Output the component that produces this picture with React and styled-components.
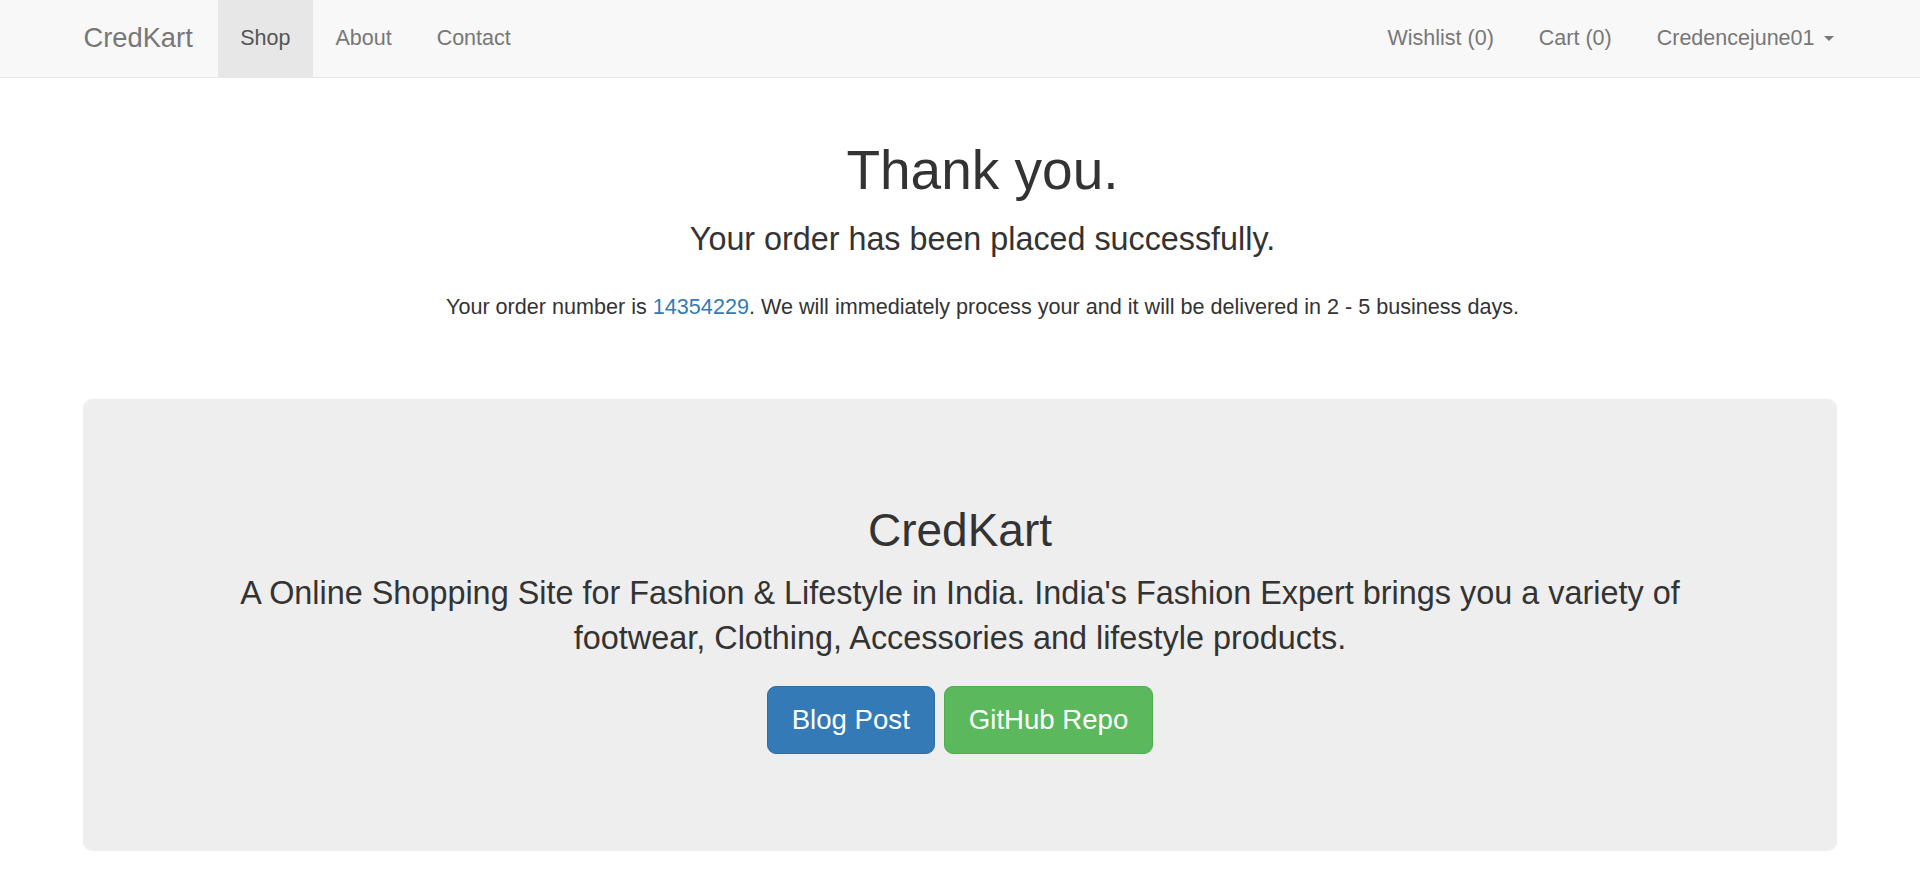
import React from "react";
import styled, { createGlobalStyle } from "styled-components";

const GlobalStyle = createGlobalStyle`
  html, body {
    margin: 0;
    padding: 0;
    background: #fff;
    font-family: "Liberation Sans", Arial, Helvetica, sans-serif;
    color: #333;
  }
  * {
    box-sizing: border-box;
  }
`;

const Navbar = styled.nav`
  height: 78px;
  background-color: #f8f8f8;
  border-bottom: 1.5px solid #e7e7e7;
`;

const NavInner = styled.div`
  display: flex;
  align-items: stretch;
  justify-content: space-between;
  height: 76.5px;
  padding: 0 64px 0 61px;
`;

const NavGroup = styled.ul`
  display: flex;
  align-items: stretch;
  margin: 0;
  padding: 0;
  list-style: none;
`;

const NavItem = styled.li`
  display: flex;
`;

const Brand = styled.a`
  display: flex;
  align-items: center;
  padding: 0 25px 0 22.5px;
  font-size: 27.3px;
  color: #777;
  text-decoration: none;
`;

const NavLink = styled.a`
  display: flex;
  align-items: center;
  padding: 0 22.5px;
  font-size: 21.5px;
  line-height: 30px;
  text-decoration: none;
  color: ${({ $active }) => ($active ? "#555" : "#777")};
  background-color: ${({ $active }) => ($active ? "#e7e7e7" : "transparent")};
`;

const Caret = styled.span`
  display: inline-block;
  width: 0;
  height: 0;
  margin-left: 9px;
  border-top: 5px solid #777;
  border-left: 5px solid transparent;
  border-right: 5px solid transparent;
`;

const Main = styled.main`
  padding: 0 83px;
`;

const Header = styled.header`
  display: flex;
  flex-direction: column;
  align-items: center;
  text-align: center;
  padding: 62px 0 0 45px;
`;

const Title = styled.h1`
  margin: 0;
  font-size: 55px;
  font-weight: 500;
  line-height: 1.1;
`;

const Subtitle = styled.h3`
  margin: 21px 0 0;
  font-size: 32.3px;
  font-weight: 500;
  line-height: 1.1;
`;

const OrderNote = styled.p`
  margin: 35px 0 0;
  font-size: 21.6px;
  line-height: 30px;
`;

const OrderLink = styled.a`
  color: #337ab7;
  text-decoration: none;
`;

const Jumbotron = styled.section`
  margin-top: 77px;
  padding: 72px 100px;
  background-color: #eee;
  border-radius: 9px;
  text-align: center;
`;

const JumboTitle = styled.h2`
  margin: 34px 0 15px;
  font-size: 46px;
  font-weight: 500;
  line-height: 1.1;
`;

const Lead = styled.p`
  margin: 0 0 25px;
  font-size: 32.4px;
  line-height: 45px;
`;

const ButtonRow = styled.div`
  display: flex;
  justify-content: center;
  gap: 9px;
  margin-bottom: 25px;
`;

const Button = styled.a`
  display: inline-block;
  padding: 15px 24px;
  font-size: 27.6px;
  line-height: 36px;
  color: #fff;
  text-decoration: none;
  border-radius: 9px;
  border: 1.5px solid ${({ $variant }) => ($variant === "success" ? "#4cae4c" : "#2e6da4")};
  background-color: ${({ $variant }) => ($variant === "success" ? "#5cb85c" : "#337ab7")};
`;

const leftLinks = ["Shop", "About", "Contact"];
const rightLinks = ["Wishlist (0)", "Cart (0)"];

export default function App() {
  return (
    <>
      <GlobalStyle />
      <Navbar>
        <NavInner>
          <NavGroup>
            <Brand href="#">CredKart</Brand>
            {leftLinks.map((link) => (
              <NavItem key={link}>
                <NavLink href="#" $active={link === "Shop"}>
                  {link}
                </NavLink>
              </NavItem>
            ))}
          </NavGroup>
          <NavGroup>
            {rightLinks.map((link) => (
              <NavItem key={link}>
                <NavLink href="#">{link}</NavLink>
              </NavItem>
            ))}
            <NavItem>
              <NavLink href="#">
                Credencejune01
                <Caret />
              </NavLink>
            </NavItem>
          </NavGroup>
        </NavInner>
      </Navbar>
      <Main>
        <Header>
          <Title>Thank you.</Title>
          <Subtitle>Your order has been placed successfully.</Subtitle>
          <OrderNote>
            Your order number is <OrderLink href="#">14354229</OrderLink>. We
            will immediately process your and it will be delivered in 2 - 5
            business days.
          </OrderNote>
        </Header>
        <Jumbotron>
          <JumboTitle>CredKart</JumboTitle>
          <Lead>
            A Online Shopping Site for Fashion &amp; Lifestyle in India. India's
            Fashion Expert brings you a variety of footwear, Clothing,
            Accessories and lifestyle products.
          </Lead>
          <ButtonRow>
            <Button href="#">Blog Post</Button>
            <Button href="#" $variant="success">
              GitHub Repo
            </Button>
          </ButtonRow>
        </Jumbotron>
      </Main>
    </>
  );
}
